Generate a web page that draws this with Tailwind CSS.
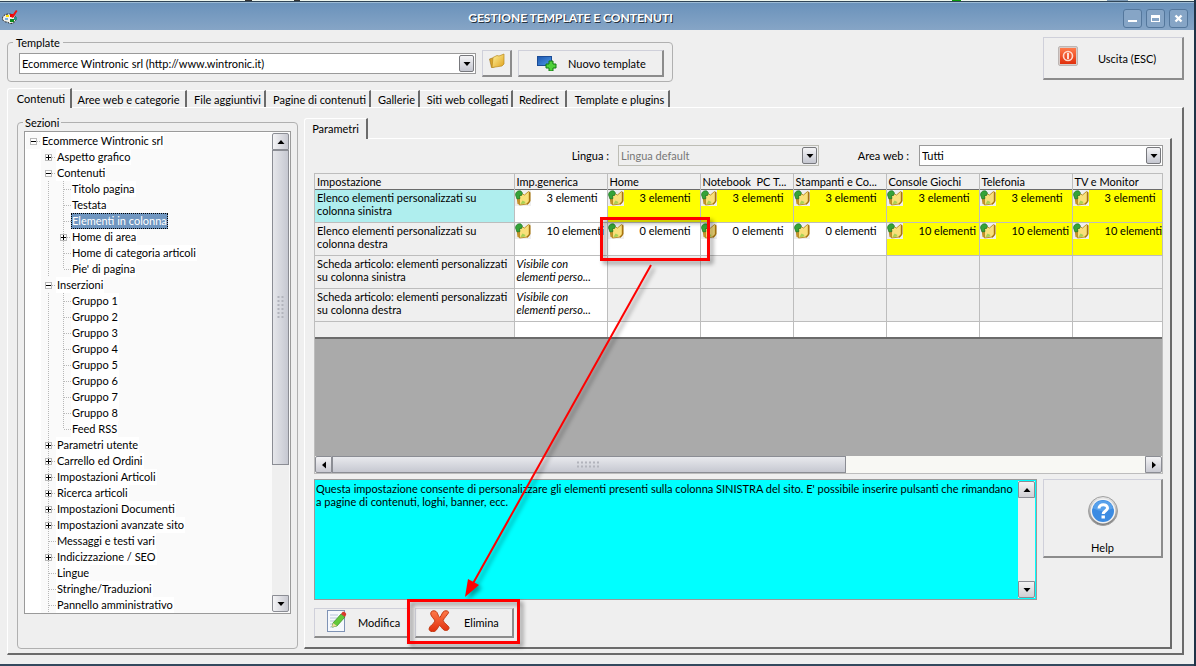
<!DOCTYPE html>
<html lang="it">
<head>
  <meta charset="UTF-8" />
  <meta name="viewport" content="width=device-width, initial-scale=1.0" />
  <title>Gestione template e contenuti</title>
  <script src="https://cdn.jsdelivr.net/npm/@tailwindcss/browser@4"></script>
</head>
<body class="relative flex flex-col min-h-screen overflow-x-hidden bg-[#efefef] font-['Lato',sans-serif] text-[11px] leading-[13px] text-black border-r-2 border-[#1f3347]">

  <!-- shared icons -->
  <svg class="absolute size-0">
    <defs>
      <linearGradient id="gold" x1="0" y1="0" x2="1" y2="1">
        <stop offset="0" stop-color="#fff3a0" /><stop offset="1" stop-color="#e0a21c" />
      </linearGradient>
      <linearGradient id="blue" x1="0" y1="0" x2="1" y2="1">
        <stop offset="0" stop-color="#1d55ad" /><stop offset="1" stop-color="#4c9bea" />
      </linearGradient>
      <linearGradient id="red" x1="0" y1="0" x2="0" y2="1">
        <stop offset="0" stop-color="#ff7a4a" /><stop offset="1" stop-color="#e02f0c" />
      </linearGradient>
      <linearGradient id="ring" x1="0" y1="0" x2="0" y2="1">
        <stop offset="0" stop-color="#e8e8e8" /><stop offset="1" stop-color="#7c7c7c" />
      </linearGradient>
    </defs>
    <symbol id="folder" viewBox="0 0 16 16">
      <path d="M.500 6l3-1 2 1v8l-3 .500z" fill="#d9a32a" stroke="#9b6f12" stroke-width=".6" />
      <path d="M4 4.500l4-2 2 .500 5-2V11l-2 2-10 1.500z" fill="url(#gold)" stroke="#b98a1c" stroke-width=".7" />
    </symbol>
    <symbol id="folder-in" viewBox="0 0 16 16">
      <path d="M1.500 7l3-2 1 10-3-1z" fill="#c3922b" />
      <path d="M4.500 6l3-2 2 1 4-3.500 1.500 1V11l-2.500 3-8 1z" fill="#f9e07a" stroke="#b58a24" stroke-width=".9" />
      <path d="M14.500 2v9.500L12 14.300" fill="none" stroke="#a87410" stroke-width="1.400" />
      <path d="M5.500 14l2-3.500 3 1.500-1 1.800z" fill="#a9d155" />
      <path d="M.500 5c0-3 2.500-5 5.500-4l1.500 2-1 2.500H4.500l.500 3-3 .500z" fill="#35a339" stroke="#15701f" stroke-width=".6" />
    </symbol>
    <symbol id="up" viewBox="0 0 8 8"><path d="M0.500 6h7L4 2z" /></symbol>
    <symbol id="down" viewBox="0 0 8 8"><path d="M0.500 2h7L4 6z" /></symbol>
    <symbol id="left" viewBox="0 0 8 8"><path d="M6 0.500v7L2 4z" /></symbol>
    <symbol id="right" viewBox="0 0 8 8"><path d="M2 0.500v7L6 4z" /></symbol>
    <!-- tree guides -->
    <symbol id="g-v" viewBox="0 0 15 16"><path d="M7.500 0v16" stroke="#b8b8b8" stroke-dasharray="1 1" /></symbol>
    <symbol id="g-t" viewBox="0 0 15 16"><path d="M7.500 0v16M8 8.500h7" fill="none" stroke="#b8b8b8" stroke-dasharray="1 1" /></symbol>
    <symbol id="g-l" viewBox="0 0 15 16"><path d="M7.500 0v8M8 8.500h7" fill="none" stroke="#b8b8b8" stroke-dasharray="1 1" /></symbol>
    <symbol id="g-minus" viewBox="0 0 15 16">
      <path d="M11 8.500h4" stroke="#b8b8b8" stroke-dasharray="1 1" />
      <rect x="4.500" y="5.500" width="6" height="6" fill="#fff" stroke="#b8b8b8" /><path d="M5 8.500h5" stroke="#000" />
    </symbol>
    <symbol id="g-plus" viewBox="0 0 15 16">
      <path d="M11 8.500h4" stroke="#b8b8b8" stroke-dasharray="1 1" />
      <rect x="4.500" y="5.500" width="6" height="6" fill="#fff" stroke="#b8b8b8" /><path d="M5 8.500h5M7.500 6v5" stroke="#000" />
    </symbol>
  </svg>

  <!-- sliver of the window behind -->
  <div class="flex h-[2px] bg-[#eef6ee] border-b border-[#2f4558]">
    <span class="w-[7px] ml-[245px] bg-[#333]"></span>
    <span class="w-[6px] ml-[42px] bg-[#333]"></span>
    <span class="w-[9px] ml-auto bg-[#0a9a0a]"></span>
    <span class="w-[21px] ml-[146px] mr-[66px] bg-[#7d9ab5]"></span>
  </div>

  <header class="flex items-center h-7 pl-[2px] pr-[6px] bg-linear-to-b from-[#6a92bb] to-[#86a5c6] border-t border-[#9dbbd4]">
    <svg class="size-4" viewBox="0 0 16 16">
      <path d="M.500 9.500C.500 6.500 3.500 5 7 5s7 2 7 4.500-2 5-5.500 5c-2 0-2-1.500-4-1.500s-4-1.500-4-3.500z" fill="#f2f2ea" stroke="#222" stroke-dasharray="2 1" />
      <rect x="4" y="6" width="3" height="2" fill="#ffe100" /><rect x="8" y="5" width="4" height="3" fill="#e00" />
      <rect x="8" y="10" width="4" height="3" fill="#0a8a1c" /><rect x="3" y="9" width="3" height="2" fill="#7cb0dd" />
      <path d="M9 8l5-7 1.500 1-4.500 7z" fill="#e11" /><path d="M12 8h3v3h-3z" fill="#2a8f8a" />
    </svg>
    <h1 class="flex-1 pt-[2px] text-center text-[12px] font-bold text-white [text-shadow:1px_1px_0_#25313d]">GESTIONE TEMPLATE E CONTENUTI</h1>
    <div class="flex gap-1 pt-1">
      <button aria-label="Riduci" class="grid place-items-center size-[19px] rounded-[3px] border border-[#54779c] bg-[#86a5c6]">
        <svg class="w-[11px] h-[11px]" viewBox="0 0 11 11"><path d="M1 7h9v2H1z" fill="#fff" /></svg>
      </button>
      <button aria-label="Ingrandisci" class="grid place-items-center size-[19px] rounded-[3px] border border-[#54779c] bg-[#86a5c6]">
        <svg class="w-[11px] h-[11px]" viewBox="0 0 11 11"><path d="M1 2h9v7H1zM2 5v3h7V5z" fill="#fff" fill-rule="evenodd" /></svg>
      </button>
      <button aria-label="Chiudi" class="grid place-items-center size-[19px] rounded-[3px] border border-[#54779c] bg-[#86a5c6]">
        <svg class="w-[11px] h-[11px]" viewBox="0 0 11 11"><path d="M2.500 2.500l6 6M8.500 2.500l-6 6" stroke="#fff" stroke-width="2.400" /></svg>
      </button>
    </div>
  </header>

  <main class="flex-1 flex flex-col pl-[7px] pr-[10px] pb-[9px] pt-[6px] border-b-2 border-[#34495e]">
    <div class="flex items-start justify-between">
      <fieldset class="flex items-center w-[666px] h-[46px] px-[11px] pt-0 border border-[#b0b0b0] rounded-[4px]">
        <legend class="px-[3px] -ml-[6px]">Template</legend>
        <div class="relative flex-1 mr-[6px] -mt-[3px]">
          <select aria-label="Template" class="block w-full h-[21px] px-[2px] appearance-none bg-white border border-[#9a9a9a]">
            <option>Ecommerce Wintronic srl (http://www.wintronic.it)</option>
          </select>
          <span class="absolute right-[2px] top-[2px] grid place-items-center w-[15px] h-[17px] rounded-[2px] border border-[#77787c] bg-linear-to-b from-[#f4f4f6] to-[#c5c7d0] pointer-events-none"><svg class="size-2"><use href="#down" /></svg></span>
        </div>
        <button aria-label="Apri cartella" class="grid place-items-center w-[30px] h-[27px] mr-[6px] pb-1 -mt-[3px] border border-t-[#cfd0da] border-l-[#cfd0da] border-r-2 border-b-2 border-r-[#8c8c8c] border-b-[#8c8c8c]">
          <svg class="size-4"><use href="#folder" /></svg>
        </button>
        <button class="flex items-center w-[146px] h-[27px] pl-[18px] -mr-[3px] -mt-[3px] border border-t-[#cfd0da] border-l-[#cfd0da] border-r-2 border-b-2 border-r-[#8c8c8c] border-b-[#8c8c8c]">
          <svg class="w-5 h-4 mr-[11px]" viewBox="0 0 20 16">
            <rect x=".5" y="1.500" width="14" height="9" fill="url(#blue)" stroke="#1b4c96" />
            <path d="M12 6h4v3h3v4h-3v3h-4v-3H9V9h3z" fill="#4fd13a" stroke="#137a12" />
          </svg>
          Nuovo template
        </button>
      </fieldset>
      <button class="flex items-center w-[141px] h-[43px] mt-px pl-[14px] border border-t-[#cfd0da] border-l-[#cfd0da] border-r-2 border-b-2 border-r-[#8c8c8c] border-b-[#8c8c8c]">
        <svg class="size-5 mr-5 -mt-1" viewBox="0 0 20 20">
          <rect x=".5" y=".5" width="19" height="19" rx="1.500" fill="#d8ccc8" stroke="#bdb6b4" />
          <rect x="2" y="2" width="16" height="16" fill="url(#red)" />
          <circle cx="10" cy="10" r="4.500" fill="none" stroke="#ffd9cc" stroke-width="1.600" />
          <path d="M10 7v6" stroke="#fff" stroke-width="1.600" />
        </svg>
        Uscita (ESC)
      </button>
    </div>

    <nav class="flex items-end h-[20px] mt-[5px] relative z-10">
      <button class="h-[20px] w-[65px] -mb-px pl-1 border-t border-l border-white border-r-2 border-r-[#6b6b6b] rounded-tl-[3px] bg-[#efefef]">Contenuti</button>
      <button class="h-[17px] w-[115px] border-t border-white border-r-2 border-r-[#6b6b6b]">Aree web e categorie</button>
      <button class="h-[17px] w-[79px] pl-1 border-t border-white border-r-2 border-r-[#6b6b6b]">File aggiuntivi</button>
      <button class="h-[17px] w-[105px] pl-1 border-t border-white border-r-2 border-r-[#6b6b6b]">Pagine di contenuti</button>
      <button class="h-[17px] w-[49px] pl-1 border-t border-white border-r-2 border-r-[#6b6b6b]">Gallerie</button>
      <button class="h-[17px] w-[93px] pl-1 border-t border-white border-r-2 border-r-[#6b6b6b]">Siti web collegati</button>
      <button class="h-[17px] w-[54px] border-t border-white border-r-2 border-r-[#6b6b6b]">Redirect</button>
      <button class="h-[17px] w-[103px] pl-1 border-t border-white border-r-2 border-r-[#6b6b6b]">Template e plugins</button>
    </nav>

    <section class="flex-1 flex gap-[6px] pl-[9px] pr-[10px] pt-[8px] pb-1 border-t border-l border-white border-r-2 border-b-2 border-r-[#6b6b6b] border-b-[#6b6b6b]">

      <fieldset class="flex flex-col w-[281px] px-[6px] pb-[33px] pt-[2px] border border-[#b0b0b0] rounded-[4px]">
        <legend class="px-[2px] -ml-px">Sezioni</legend>
        <div class="flex h-[483px] bg-white border border-[#9a9a9a] overflow-hidden">
          <ul id="tree" class="flex-1 pl-px pt-px"></ul>
          <div class="flex flex-col w-[18px] pt-px pb-px pr-px bg-[#fafafa]">
            <button aria-label="Su" class="grid place-items-center w-full h-[17px] rounded-t-[2px] border border-[#8b8d94] bg-linear-to-r from-[#f4f4f6] to-[#c9cad2]"><svg class="size-2"><use href="#up" /></svg></button>
            <div class="flex-1 bg-[#efefef]">
              <div class="grid place-items-center h-[315px] border border-[#8b8d94] bg-linear-to-r from-[#e6e7eb] to-[#c6c8d1]">
                <svg class="w-[7px] h-[24px]" viewBox="0 0 7 24"><path d="M1.500 0v24M5.500 0v24" stroke="#b2b4bc" stroke-width="2" stroke-dasharray="2 2" /></svg>
              </div>
            </div>
            <button aria-label="Giù" class="grid place-items-center w-full h-[17px] rounded-b-[2px] border border-[#8b8d94] bg-linear-to-r from-[#f4f4f6] to-[#c9cad2]"><svg class="size-2"><use href="#down" /></svg></button>
          </div>
        </div>
      </fieldset>

      <div class="flex-1 min-w-0 flex flex-col pt-[2px]">
        <div class="flex h-[20px] relative z-10">
          <button class="w-[64px] h-[21px] -mb-px pb-[2px] border-t border-l border-white border-r-2 border-r-[#6b6b6b] rounded-tl-[3px] bg-[#efefef]">Parametri</button>
        </div>
        <div class="flex-1 flex flex-col pl-[9px] pr-[7px] pt-[6px] border-t border-l border-white border-r-2 border-b-2 border-r-[#6b6b6b] border-b-[#6b6b6b]">
          <div class="flex items-center justify-end">
            <label for="lingua" class="mr-[9px]">Lingua :</label>
            <div class="relative w-[201px]">
              <select id="lingua" class="block w-full h-[21px] px-[2px] appearance-none border border-[#bdbdb5] text-[#777]">
                <option>Lingua default</option>
              </select>
              <span class="absolute right-[2px] top-[2px] grid place-items-center w-[15px] h-[17px] rounded-[2px] border border-[#77787c] bg-linear-to-b from-[#f4f4f6] to-[#c5c7d0] pointer-events-none"><svg class="size-2"><use href="#down" /></svg></span>
            </div>
            <label for="area" class="w-[100px] pr-[10px] text-right">Area web :</label>
            <div class="relative w-[244px]">
              <select id="area" class="block w-full h-[21px] px-[2px] appearance-none bg-white border border-[#9a9a9a]">
                <option>Tutti</option>
              </select>
              <span class="absolute right-[2px] top-[2px] grid place-items-center w-[15px] h-[17px] rounded-[2px] border border-[#77787c] bg-linear-to-b from-[#f4f4f6] to-[#c5c7d0] pointer-events-none"><svg class="size-2"><use href="#down" /></svg></span>
            </div>
          </div>

          <div class="flex flex-col h-[301px] mt-[7px] bg-[#aaaaaa] border border-[#bdbdbd] overflow-hidden">
            <table class="table-fixed border-collapse w-[850px] shrink-0 border-b-2 border-[#6b6b6b]">
              <thead>
                <tr id="head" class="h-[15px] border-b border-[#6b6b6b] text-left"></tr>
              </thead>
              <tbody id="rows"></tbody>
            </table>
            <div class="flex h-[17px] mt-auto bg-[#f8f8f4]">
              <button aria-label="Sinistra" class="grid place-items-center w-[17px] border border-[#8b8d94] rounded-l-[2px] bg-linear-to-b from-[#f4f4f6] to-[#c9cad2]"><svg class="size-2"><use href="#left" /></svg></button>
              <div class="grid place-items-center w-[514px] border border-[#8b8d94] bg-linear-to-b from-[#e8e9ed] to-[#c6c8d1]">
                <svg class="w-[24px] h-[7px]" viewBox="0 0 24 7"><path d="M0 1.500h24M0 5.500h24" stroke="#b2b4bc" stroke-width="2" stroke-dasharray="2 2" /></svg>
              </div>
              <button aria-label="Destra" class="grid place-items-center w-[17px] ml-auto border border-[#8b8d94] rounded-r-[2px] bg-linear-to-b from-[#f4f4f6] to-[#c9cad2]"><svg class="size-2"><use href="#right" /></svg></button>
            </div>
          </div>

          <div class="flex items-start gap-[6px] mt-[5px]">
            <div class="flex flex-1 h-[121px] p-px bg-[#00ffff] border border-[#9a9a9a]">
              <textarea aria-label="Descrizione" readonly class="flex-1 pt-px resize-none overflow-hidden outline-none">Questa impostazione consente di personalizzare gli elementi presenti sulla colonna SINISTRA del sito. E' possibile inserire pulsanti che rimandano a pagine di contenuti, loghi, banner, ecc.</textarea>
              <div class="flex flex-col justify-between w-[17px] bg-[#efefef]">
                <button aria-label="Scorri su" class="grid place-items-center h-[17px] rounded-t-[2px] border border-[#8b8d94] bg-linear-to-b from-[#f4f4f4] to-[#d0d0d4]"><svg class="size-2"><use href="#up" /></svg></button>
                <button aria-label="Scorri giù" class="grid place-items-center h-[17px] rounded-b-[2px] border border-[#8b8d94] bg-linear-to-b from-[#f4f4f4] to-[#d0d0d4]"><svg class="size-2"><use href="#down" /></svg></button>
              </div>
            </div>
            <button class="flex flex-col items-center w-[120px] h-[79px] pt-4 gap-[15px] border border-t-[#cfd0da] border-l-[#cfd0da] border-r-2 border-b-2 border-r-[#8c8c8c] border-b-[#8c8c8c]">
              <svg class="size-[30px]" viewBox="0 0 30 30">
                <circle cx="15" cy="15" r="14.500" fill="url(#ring)" stroke="#a0a0a0" />
                <circle cx="15" cy="15" r="12.500" fill="#f2f2f2" />
                <circle cx="15" cy="15" r="11" fill="#3b8be2" />
                <path d="M5 12a10.500 10.500 0 0 1 20 0c-6 4-14 4-20 0z" fill="#6db0f2" opacity=".6" />
                <path d="M11 12.500c0-5 8.500-5 8.500-.5 0 3-4.300 3-4.300 6" fill="none" stroke="#fff" stroke-width="3" />
                <rect x="13.500" y="19.500" width="3.400" height="3" fill="#fff" />
              </svg>
              Help
            </button>
          </div>

          <div class="flex gap-[6px] mt-2">
            <button class="flex items-center w-[95px] h-[30px] pl-3 border border-t-[#cfd0da] border-l-[#cfd0da] border-r-2 border-b-2 border-r-[#8c8c8c] border-b-[#8c8c8c]">
              <svg class="w-5 h-[22px] mr-[11px] -mt-1" viewBox="0 0 20 22">
                <rect x=".5" y=".5" width="17" height="21" fill="#f6f9fd" stroke="#7f93b5" />
                <path d="M3 5h8M3 8h7M3 11h5M3 14h4M3 17h4" stroke="#b9c6dc" />
                <path d="M5 17l1-4 8-9 4 3-8 9z" fill="#63c93c" stroke="#2f8a1c" stroke-width=".7" />
                <path d="M14 4l1.500-2c1-1 4.500 1 3.500 3l-1 2z" fill="#d8392b" /><path d="M5 17l1-4 4 3z" fill="#f3d9a6" />
              </svg>
              Modifica
            </button>
            <button class="flex items-center w-[99px] h-[30px] pl-[12px] border border-t-[#cfd0da] border-l-[#cfd0da] border-r-2 border-b-2 border-r-[#8c8c8c] border-b-[#8c8c8c]">
              <svg class="size-[22px] mr-[14px] -mt-1" viewBox="0 0 22 22">
                <path d="M3.500 1.500C5 .300 8 .600 9 2.500c.8 1.500 1.500 4 2.800 5C13.500 6 14 2 16.500 1c2-.6 4.500.2 4 1.800C19 5.500 16 8 15.200 10.500c.8 3 4.800 4.500 5.800 7 .4 2.500-3 3.800-5 2.500-2-1.200-2.800-3.500-4.500-4.500-1.700 1.500-2.500 5-5 6-2.500.800-5.500-.500-5.500-2.500C1.500 15.500 6 14 7 11 6 8.500 3.500 7 2.800 4.500c-.2-1.200 0-2.200.7-3z" fill="url(#red)" stroke="#c23a14" />
              </svg>
              Elimina
            </button>
          </div>
        </div>
      </div>
    </section>
  </main>

  <!-- annotation drawn over the window -->
  <svg class="absolute left-0 top-0 w-[1190px] h-[660px] pointer-events-none drop-shadow-[3px_3px_2px_rgba(0,0,0,0.4)]" viewBox="0 0 1190 660" fill="none" stroke="#ff0000">
    <rect x="601.500" y="218.500" width="107" height="41" stroke-width="3" />
    <rect x="408.500" y="600.500" width="110" height="42" stroke-width="3" />
    <path d="M651 265L471 587" stroke-width="2" />
    <path d="M465 597l3-18 11 6z" fill="#ff0000" stroke="none" />
  </svg>

  <script>
    // [level, guide, label]
    const sections = [
      [0, 'minus', 'Ecommerce Wintronic srl'],
      [1, 'plus', 'Aspetto grafico'],
      [1, 'minus', 'Contenuti'],
      [2, 't', 'Titolo pagina'],
      [2, 't', 'Testata'],
      [2, 't', 'Elementi in colonna', true],
      [2, 'plus', 'Home di area'],
      [2, 't', 'Home di categoria articoli'],
      [2, 'l', "Pie' di pagina"],
      [1, 'minus', 'Inserzioni'],
      [2, 't', 'Gruppo 1'],
      [2, 't', 'Gruppo 2'],
      [2, 't', 'Gruppo 3'],
      [2, 't', 'Gruppo 4'],
      [2, 't', 'Gruppo 5'],
      [2, 't', 'Gruppo 6'],
      [2, 't', 'Gruppo 7'],
      [2, 't', 'Gruppo 8'],
      [2, 'l', 'Feed RSS'],
      [1, 'plus', 'Parametri utente'],
      [1, 'plus', 'Carrello ed Ordini'],
      [1, 'plus', 'Impostazioni Articoli'],
      [1, 'plus', 'Ricerca articoli'],
      [1, 'plus', 'Impostazioni Documenti'],
      [1, 'plus', 'Impostazioni avanzate sito'],
      [1, 't', 'Messaggi e testi vari'],
      [1, 'plus', 'Indicizzazione / SEO'],
      [1, 't', 'Lingue'],
      [1, 't', 'Stringhe/Traduzioni'],
      [1, 't', 'Pannello amministrativo']
    ];

    const guide = (id) => `<svg class="w-[15px] h-4 shrink-0"><use href="#g-${id}" /></svg>`;

    document.getElementById('tree').innerHTML = sections.map(([level, type, label, selected]) => {
      const blank = level > 0 ? '<span class="w-[15px] shrink-0 bg-white"></span>' : '';
      const box = type === 'plus' && label !== 'Aspetto grafico' ? guide('v').replace('shrink-0', 'shrink-0 -mr-[15px]') : '';
      const name = selected
        ? '<button class="h-4 px-px pb-[2px] bg-[#7096c0] text-white outline-1 -outline-offset-1 outline-dotted outline-black">'
        : '<button class="h-4 px-px pb-[2px] bg-white">';
      return `<li class="flex h-4 bg-[#fafafa]">${blank}${level === 2 ? guide('v') : ''}${box}${guide(type)}${name}${label}</button></li>`;
    }).join('');

    const columns = ['Impostazione', 'Imp.generica', 'Home', 'Notebook&nbsp; PC T...', 'Stampanti e Co...', 'Console Giochi', 'Telefonia', 'TV e Monitor'];
    document.getElementById('head').innerHTML = columns.map((c, i) =>
      `<th class="${i ? 'w-[93px]' : 'w-[199px]'} px-[2px] py-0 font-normal whitespace-nowrap bg-[#efefef] border-r border-[#bdbdbd]">${c}</th>`
    ).join('');

    // "!" marks a highlighted cell
    const rows = [
      ['Elenco elementi personalizzati su<br>colonna sinistra', '3', '!3', '!3', '!3', '!3', '!3', '!3'],
      ['Elenco elementi personalizzati su<br>colonna destra', '10', '0', '0', '0', '!10', '!10', '!10'],
      ['Scheda articolo: elementi personalizzati<br>su colonna sinistra', 'Visibile con elementi perso...', '', '', '', '', '', ''],
      ['Scheda articolo: elementi personalizzati<br>su colonna destra', 'Visibile con elementi perso...', '', '', '', '', '', '']
    ];

    function cell(value, i, r) {
      if (i === 0) return `<td class="${r ? 'bg-[#efefef]' : 'bg-[#afeeee]'} align-top px-[2px] pt-px whitespace-nowrap border-r border-b border-[#bdbdbd]">${value}</td>`;
      if (!value) return '<td class="bg-[#efefef] border-r border-b border-[#bdbdbd]"></td>';
      if (value.startsWith('Vis')) return `<td class="bg-white italic align-top pl-[2px] pt-px whitespace-nowrap border-r border-b border-[#bdbdbd]">${value.replace('con ', 'con<br>')}</td>`;
      const bg = value[0] === '!' ? 'bg-[#ffff00]' : 'bg-white';
      return `<td class="${bg} align-top p-0 overflow-hidden border-r border-b border-[#bdbdbd]">
        <div class="flex"><svg class="size-4 shrink-0 mr-4 bg-[#efefef]"><use href="#folder-in" /></svg><span class="pt-px whitespace-nowrap">${value.replace('!', '')} elementi</span></div></td>`;
    }

    document.getElementById('rows').innerHTML = rows.map((row, r) =>
      `<tr class="h-[33px]">${row.map((v, i) => cell(v, i, r)).join('')}</tr>`
    ).join('') + `<tr class="h-[17px]">${columns.map((c, i) => `<td class="${i ? 'bg-white' : 'bg-[#efefef]'} border-r border-[#bdbdbd]"></td>`).join('')}</tr>`;
  </script>
</body>
</html>
